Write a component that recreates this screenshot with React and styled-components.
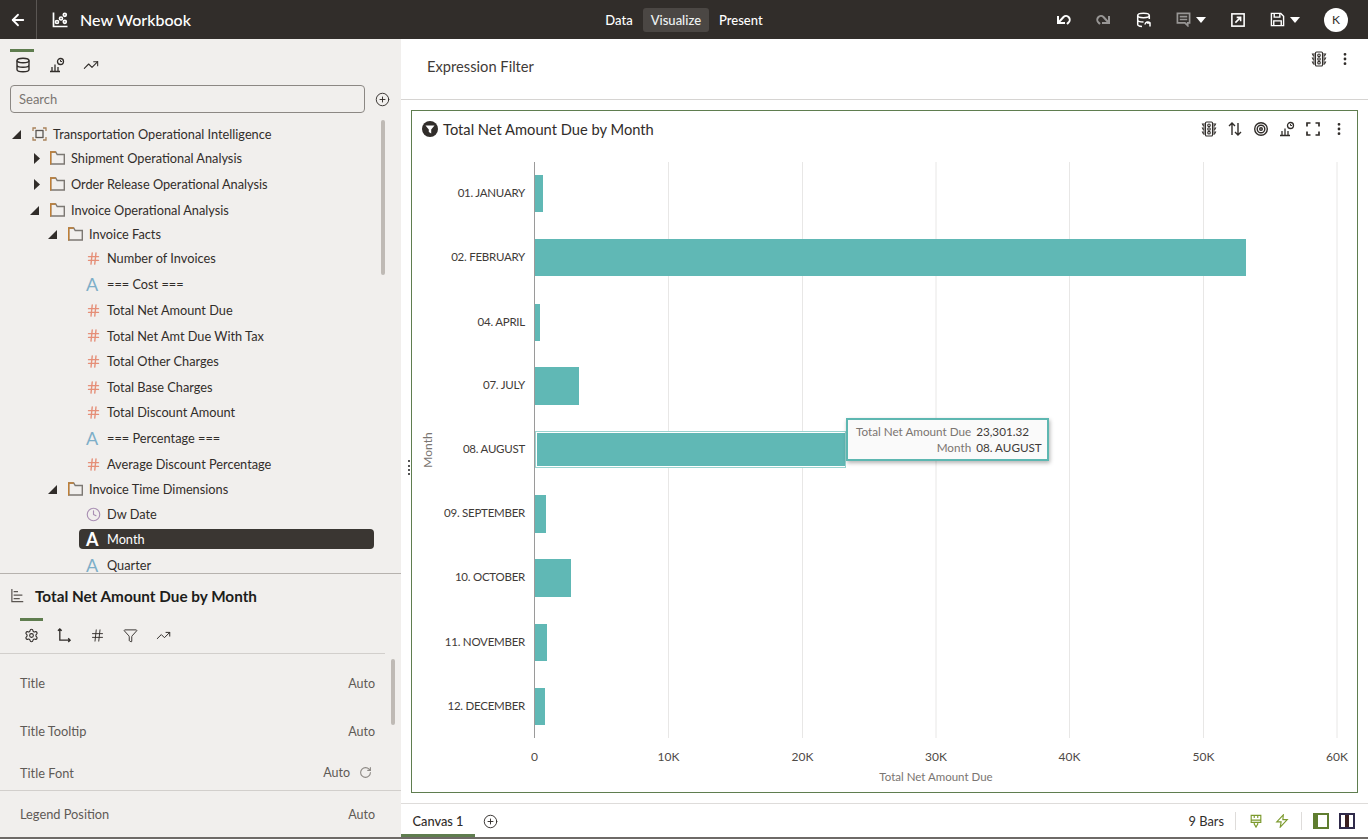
import React from 'react';
import styled, { createGlobalStyle } from 'styled-components';
import {
  ArrowLeft,
  Clock,
  Filter,
  Hash,
  MoreVertical,
  PlusCircle,
  RotateCw,
  Settings,
  TrendingUp,
} from 'lucide-react';

const Global = createGlobalStyle`
  html, body { margin: 0; padding: 0; height: 100%; overflow: hidden; }
  body { font-family: Lato, "Open Sans", sans-serif; color: #312d2a; background: #fff; }
  * { box-sizing: border-box; }
`;

const Page = styled.div`
  width: 1368px;
  height: 839px;
  display: flex;
  flex-direction: column;
  overflow: hidden;
`;

/* ---------- top bar ---------- */
const TopBar = styled.header`
  height: 39px;
  flex: none;
  background: #312d2a;
  color: #fff;
  display: grid;
  grid-template-columns: 1fr auto 1fr;
  align-items: center;
`;
const TopLeft = styled.div`
  display: flex;
  align-items: center;
  height: 100%;
`;
const BackBox = styled.div`
  width: 37px;
  height: 100%;
  display: flex;
  align-items: center;
  justify-content: center;
  border-right: 1px solid #5a5653;
`;
const WorkbookName = styled.div`
  display: flex;
  align-items: center;
  gap: 12px;
  padding-left: 15px;
  font-size: 16px;
  font-weight: 500;
`;
const ModeTabs = styled.nav`
  display: flex;
  align-items: center;
  gap: 2px;
`;
const ModeTab = styled.div`
  height: 24px;
  padding: 0 8px;
  display: flex;
  align-items: center;
  font-size: 13px;
  font-weight: 500;
  border-radius: 3px;
  background: ${(p) => (p.$active ? '#4b4744' : 'transparent')};
  color: ${(p) => (p.$active ? '#eef3f3' : '#fff')};
`;
const TopRight = styled.div`
  display: flex;
  align-items: center;
  justify-content: flex-end;
  padding-right: 20px;
`;
const TopIcon = styled.div`
  display: flex;
  align-items: center;
  gap: 5px;
  margin-left: ${(p) => p.$ml || 0}px;
  opacity: ${(p) => (p.$dim ? 0.5 : 1)};
`;
const DimSlot = styled.span`
  display: flex;
  opacity: 0.5;
`;
const Caret = styled.span`
  width: 0;
  height: 0;
  border-left: 5px solid transparent;
  border-right: 5px solid transparent;
  border-top: 6px solid #fff;
`;
const Avatar = styled.div`
  width: 24px;
  height: 24px;
  margin-left: 24px;
  border-radius: 50%;
  background: #fff;
  color: #312d2a;
  font-size: 12px;
  display: flex;
  align-items: center;
  justify-content: center;
`;

/* ---------- layout ---------- */
const Body = styled.div`
  flex: 1;
  display: flex;
  min-height: 0;
`;
const Side = styled.aside`
  width: 401px;
  flex: none;
  background: #f1efed;
  display: flex;
  flex-direction: column;
  border-bottom: 2px solid #6e6a67;
`;
const DataPanel = styled.section`
  height: 535px;
  flex: none;
  position: relative;
  overflow: hidden;
  border-bottom: 1px solid #b6b2ae;
`;
const Tabs = styled.div`
  display: flex;
  padding-left: ${(p) => p.$pl}px;
  padding-top: ${(p) => p.$pt}px;
`;
const TabItem = styled.div`
  width: ${(p) => p.$w}px;
  height: ${(p) => p.$h}px;
  display: flex;
  align-items: center;
  justify-content: center;
  padding-left: ${(p) => p.$inset || 0}px;
  border-top: 3px solid ${(p) => (p.$active ? '#5f7d4f' : 'transparent')};
`;
const SearchRow = styled.div`
  display: flex;
  align-items: center;
  gap: 10px;
  padding: 7px 0 0 10px;
`;
const SearchBox = styled.div`
  width: 355px;
  height: 28px;
  border: 1px solid #8c8884;
  border-radius: 4px;
  padding-left: 8px;
  display: flex;
  align-items: center;
  font-size: 13px;
  color: #7a7571;
`;
const Tree = styled.div`
  display: flex;
  flex-direction: column;
  padding-top: 9px;
  font-size: 12.75px;
`;
const Row = styled.div`
  height: 24px;
  flex: none;
  display: flex;
  align-items: center;
  margin-top: ${(p) => p.$mt || 0}px;
  padding-left: ${(p) => 12 + p.$depth * 18}px;
`;
const Twist = styled.span`
  width: 20px;
  flex: none;
  display: flex;
  padding-left: ${(p) => (p.$open ? 0 : 4)}px;
`;
const RowIcon = styled.span`
  width: 21px;
  flex: none;
  display: flex;
  align-items: center;
`;
const Leaf = styled.div`
  height: 20px;
  flex: none;
  margin: ${(p) => (p.$mt || 0) + 2}px 27px 2px 79px;
  padding-left: 7px;
  display: flex;
  align-items: center;
  border-radius: 4px;
  background: ${(p) => (p.$selected ? '#3a3632' : 'transparent')};
  color: ${(p) => (p.$selected ? '#fff' : 'inherit')};
`;
const LetterIcon = styled.span`
  font-size: 18px;
  line-height: 1;
  color: ${(p) => (p.$selected ? '#fff' : '#7daec8')};
  font-weight: ${(p) => (p.$selected ? 700 : 400)};
`;
const ScrollThumb = styled.div`
  position: absolute;
  left: ${(p) => p.$x}px;
  top: ${(p) => p.$y}px;
  width: 4px;
  height: ${(p) => p.$h}px;
  border-radius: 2px;
  background: #bfbab5;
`;
const PropsPanel = styled.section`
  flex: 1;
  position: relative;
  overflow: hidden;
  min-height: 0;
`;
const PropsTitle = styled.div`
  display: flex;
  align-items: center;
  gap: 10px;
  padding: 11px 0 0 11px;
  height: 32px;
  font-size: 15.3px;
  font-weight: 700;
  color: #201d1b;
`;
const PropsTabs = styled.div`
  margin-right: 16px;
  padding-bottom: 3px;
  border-bottom: 1px solid #d2cfcc;
`;
const PropRow = styled.div`
  height: ${(p) => p.$h}px;
  display: flex;
  align-items: center;
  justify-content: space-between;
  padding: 0 26px 0 20px;
  font-size: 12.8px;
  color: #5f5a56;
  border-bottom: ${(p) => (p.$line ? '1px solid #d2cfcc' : 'none')};
`;
const PropValue = styled.span`
  display: flex;
  align-items: center;
  gap: 9px;
  font-size: 12.5px;
  svg {
    margin-right: 3px;
  }
`;

/* ---------- canvas side ---------- */
const Main = styled.main`
  flex: 1;
  min-width: 0;
  display: flex;
  flex-direction: column;
  border-bottom: 2px solid #6e6a67;
`;
const FilterBar = styled.div`
  height: 61px;
  flex: none;
  display: flex;
  justify-content: space-between;
  border-bottom: 1px solid #d6d4d2;
  padding: 11px 15px 0 26px;
  font-size: 14.7px;
  color: #3f3b38;
`;
const FilterLabel = styled.div`
  padding-top: 7px;
`;
const IconGroup = styled.div`
  display: flex;
  align-items: center;
  gap: ${(p) => p.$gap}px;
  height: 18px;
`;
const ChartArea = styled.div`
  flex: 1;
  padding: 10px;
  min-height: 0;
  display: flex;
`;
const Frame = styled.div`
  flex: 1;
  position: relative;
  display: flex;
  flex-direction: column;
  border: 1px solid #5f7d4f;
  min-width: 0;
`;
const FrameHead = styled.div`
  height: 36px;
  flex: none;
  display: flex;
  align-items: center;
  justify-content: space-between;
  padding: 0 10px 1px;
`;
const FrameTitle = styled.div`
  display: flex;
  align-items: center;
  gap: 5px;
  font-size: 14.7px;
  color: #312d2a;
`;
const Plot = styled.svg`
  flex: 1;
  min-height: 0;
  display: block;
  font-family: Lato, "Open Sans", sans-serif;
`;
const Tooltip = styled.div`
  position: absolute;
  left: 434px;
  top: 307px;
  width: 203px;
  height: 43px;
  background: #fafafa;
  border: 2px solid #5db7b1;
  box-shadow: 1px 2px 4px rgba(0, 0, 0, 0.3);
  padding: 4px 8px;
  display: grid;
  grid-template-columns: auto auto;
  justify-content: start;
  column-gap: 5px;
  font-size: 11.7px;
  line-height: 15px;
  white-space: nowrap;
  color: #3f3b38;
`;
const TipKey = styled.span`
  text-align: right;
  color: #7a7571;
`;
const Handle = styled.div`
  position: absolute;
  left: 408px;
  top: 460px;
  width: 2px;
  height: 15px;
  border-left: 2px dotted #555;
`;
const Footer = styled.footer`
  height: 34px;
  flex: none;
  display: flex;
  align-items: stretch;
  border-top: 1px solid #dedcda;
  font-size: 12.8px;
`;
const CanvasTab = styled.div`
  width: 74px;
  display: flex;
  align-items: center;
  justify-content: center;
  padding-top: 3px;
  font-weight: 500;
  border-bottom: 3px solid #5f7d4f;
`;
const AddTab = styled.div`
  display: flex;
  align-items: center;
  padding: 1px 0 0 8px;
`;
const FootRight = styled.div`
  margin-left: auto;
  display: flex;
  align-items: center;
  padding-right: 13px;
`;
const Sep = styled.span`
  width: 1px;
  height: 18px;
  background: #dedcda;
  margin: 0 ${(p) => p.$mr}px 0 ${(p) => p.$ml}px;
`;
const FootGap = styled.span`
  width: 12px;
`;

/* ---------- drawn icons ---------- */
const Svg = ({ size = 16, color = '#312d2a', sw = 1.4, children }) => (
  <svg width={size} height={size} viewBox="0 0 16 16" fill="none" stroke={color} strokeWidth={sw}>
    {children}
  </svg>
);
const LogoIcon = () => (
  <Svg color="#fff" size={16} sw={1.7}>
    <path d="M1.5 .5v14H15.500" />
    <circle cx="5" cy="10" r="1.500" />
    <circle cx="9" cy="6.500" r="1.500" />
    <circle cx="12.800" cy="2.800" r="1.500" />
    <circle cx="12.800" cy="9.800" r="1.500" />
  </Svg>
);
const TrafficIcon = () => (
  <Svg size={16} sw={1.1}>
    <rect x="4.500" y="1" width="7" height="14" rx="1" />
    <circle cx="8" cy="4.300" r="1.300" />
    <circle cx="8" cy="8" r="1.300" />
    <circle cx="8" cy="11.700" r="1.300" />
    <path d="M4.500 3h-3l1 2h2M4.500 7h-3l1 2h2M4.500 11h-3l1 2h2M11.500 3h3l-1 2h-2M11.500 7h3l-1 2h-2M11.500 11h3l-1 2h-2" />
  </Svg>
);
const BarsClock = () => (
  <Svg size={16} sw={1.3}>
    <path d="M1 14.500h10M3 14V10M6 14V7.500M9 14v-4" />
    <circle cx="11.500" cy="4.500" r="3" />
    <path d="M11.500 3v1.500h1.500" strokeWidth="1" />
  </Svg>
);
const DbIcon = () => (
  <Svg size={16}>
    <ellipse cx="8" cy="3.500" rx="6" ry="2.300" />
    <path d="M2 3.500v9c0 1.300 2.700 2.300 6 2.300s6-1 6-2.300v-9M2 8c0 1.300 2.700 2.300 6 2.300S14 9.300 14 8" />
  </Svg>
);
const FolderIcon = () => (
  <svg width="15" height="14" viewBox="0 0 15 14" fill="none" strokeWidth="1.400">
    <path d="M.7 13V1h5l1.500 2.500H14.300V13z" stroke="#7c7873" />
    <path d="M.7 13.500V1h5" stroke="#c07f35" />
  </svg>
);
const RootIcon = () => (
  <svg width="15" height="14" viewBox="0 0 15 14" fill="none" stroke="#5b5652" strokeWidth="1.300">
    <path d="M1 4V1h3M11 1h3v3M14 10v3h-3M4 13H1v-3" stroke="#a9825a" />
    <rect x="4" y="3.500" width="7" height="7" />
  </svg>
);
const Tri = ({ open }) =>
  open ? (
    <svg width="9" height="9" viewBox="0 0 9 9"><path d="M9 0v9H0z" fill="#312d2a" /></svg>
  ) : (
    <svg width="6" height="11" viewBox="0 0 6 11"><path d="M0 0l6 5.500L0 11z" fill="#312d2a" /></svg>
  );
const UndoIcon = ({ flip }) => (
  <svg width="15" height="13" viewBox="0 0 15 13" fill="none" stroke="#fff" strokeWidth="2" style={flip ? { transform: 'scaleX(-1)' } : undefined}>
    <path d="M2 3v7h7" />
    <path d="M2.500 9.500L7.500 4a3.700 3.700 0 0 1 5 5.500l-1.500 1.500" />
  </svg>
);
const DataRefresh = () => (
  <Svg color="#fff" size={16} sw={1.500}>
    <ellipse cx="7.500" cy="3.500" rx="5.800" ry="2.200" />
    <path d="M1.700 3.500v9c0 1 1.800 1.800 4.300 2M13.300 3.500V7M1.700 8c0 1.200 2.500 2 5.800 2" />
    <path d="M9 12.500a2.800 2.800 0 0 1 5-1.500M14 14.500v-3.500h-3" />
  </Svg>
);
const CommentIcon = () => (
  <Svg color="#fff" size={15} sw={1.800}>
    <path d="M1.500 1.500h13v10h-2v3l-3-3h-8z" />
    <path d="M4 5h8M4 8h8" />
  </Svg>
);
const ExportIcon = () => (
  <Svg color="#fff" size={14} sw={1.800}>
    <rect x="1" y="1" width="14" height="14" />
    <path d="M5 11l6-6M6.500 5H11v4.500" />
  </Svg>
);
const SaveIcon = () => (
  <Svg color="#fff" size={15} sw={1.500}>
    <path d="M1.500 1.500h10l3 3v10h-13z" />
    <path d="M4.500 1.500v4h6v-4M4 14.500V9.500h8v5" />
  </Svg>
);
const SortIcon = () => (
  <Svg size={16}>
    <path d="M5 14V2M2 5l3-3 3 3M11 2v12M8 11l3 3 3-3" />
  </Svg>
);
const TargetIcon = () => (
  <Svg size={16}>
    <circle cx="8" cy="8" r="6.300" />
    <circle cx="8" cy="8" r="3.800" />
    <circle cx="8" cy="8" r="1.300" />
  </Svg>
);
const ExpandIcon = () => (
  <Svg size={16} sw={1.700}>
    <path d="M2 5.500V2h3.500M10.500 2H14v3.500M14 10.500V14h-3.500M5.500 14H2v-3.500" />
  </Svg>
);
const FunnelBadge = () => (
  <svg width="16" height="16" viewBox="0 0 16 16">
    <circle cx="8" cy="8" r="8" fill="#312d2a" />
    <path d="M3.500 4.500h9L9.200 8.500v4L6.800 11V8.500z" fill="#fff" />
  </svg>
);
const AxisIcon = () => (
  <Svg size={15}>
    <path d="M3 1v12h11M1 3l2-2 2 2M12 11l2 2-2 2" />
  </Svg>
);
const BarListIcon = () => (
  <Svg size={14} color="#5b5652">
    <path d="M1 0v15M3 3h5M3 7h10M3 11h7M1 14.500h13" />
  </Svg>
);
const BrushIcon = () => (
  <Svg size={14} color="#7c9a2e" sw={1.300}>
    <path d="M2.500 1.500h11v8h-11zM2.500 7h11M6 1.500v3M10 1.500v3M6 9.500v2L8 15l2-3.500v-2" />
  </Svg>
);
const BoltIcon = () => (
  <Svg size={14} color="#7c9a2e" sw={1.300}>
    <path d="M9.500 1L2 9h5l-1 6 8-8.500H9z" />
  </Svg>
);
const ToggleLeft = styled.span`
  width: 16px;
  height: 16px;
  border: 2px solid #5f7d2f;
  border-left-width: 5px;
  margin-right: 10px;
  background: #fff;
`;
const ToggleRight = styled.span`
  width: 16px;
  height: 16px;
  border: 2px solid #2f2a4a;
  display: flex;
  justify-content: center;
  &::after {
    content: '';
    width: 4px;
    background: #3a1f1f;
  }
`;

/* ---------- data ---------- */
const treeRows = [
  { label: 'Shipment Operational Analysis', depth: 1, mt: 0 },
  { label: 'Order Release Operational Analysis', depth: 1, mt: 2 },
  { label: 'Invoice Operational Analysis', depth: 1, mt: 2, open: true },
  { label: 'Invoice Facts', depth: 2, mt: 0, open: true },
];
const facts = [
  { label: 'Number of Invoices', kind: 'hash', mt: 0 },
  { label: '=== Cost ===', kind: 'attr', mt: 2 },
  { label: 'Total Net Amount Due', kind: 'hash', mt: 2 },
  { label: 'Total Net Amt Due With Tax', kind: 'hash', mt: 1.5 },
  { label: 'Total Other Charges', kind: 'hash', mt: 1.5 },
  { label: 'Total Base Charges', kind: 'hash', mt: 2 },
  { label: 'Total Discount Amount', kind: 'hash', mt: 1 },
  { label: '=== Percentage ===', kind: 'attr', mt: 2 },
  { label: 'Average Discount Percentage', kind: 'hash', mt: 2 },
];
const timeRows = [
  { label: 'Dw Date', kind: 'time', mt: 1 },
  { label: 'Month', kind: 'attr', mt: 1, selected: true },
  { label: 'Quarter', kind: 'attr', mt: 2 },
];
const bars = [
  { label: '01. JANUARY', y: 175, h: 37, x2: 543 },
  { label: '02. FEBRUARY', y: 239, h: 37, x2: 1246 },
  { label: '04. APRIL', y: 304, h: 37, x2: 540 },
  { label: '07. JULY', y: 367, h: 38, x2: 579 },
  { label: '08. AUGUST', y: 433, h: 33, x2: 845, x1: 537 },
  { label: '09. SEPTEMBER', y: 495, h: 38, x2: 546 },
  { label: '10. OCTOBER', y: 559, h: 38, x2: 571 },
  { label: '11. NOVEMBER', y: 624, h: 37, x2: 547 },
  { label: '12. DECEMBER', y: 688, h: 37, x2: 545 },
];
const ticks = [
  ['0', 534.5],
  ['10K', 668.5],
  ['20K', 802.5],
  ['30K', 936],
  ['40K', 1069.5],
  ['50K', 1203.5],
  ['60K', 1337],
];

const LeafIcon = ({ kind, selected }) => {
  if (kind === 'hash') return <Hash size={15} color="#e58f78" strokeWidth={2.2} />;
  if (kind === 'time') return <Clock size={15} color="#a98fb3" strokeWidth={1.8} />;
  return <LetterIcon $selected={selected}>A</LetterIcon>;
};

const LeafRow = ({ row }) => (
  <Leaf $mt={row.mt} $selected={row.selected}>
    <RowIcon><LeafIcon kind={row.kind} selected={row.selected} /></RowIcon>
    {row.label}
  </Leaf>
);

const FolderRow = ({ row }) => (
  <Row $depth={row.depth} $mt={row.mt}>
    <Twist $open={row.open}><Tri open={row.open} /></Twist>
    <RowIcon><FolderIcon /></RowIcon>
    {row.label}
  </Row>
);

function Chart() {
  return (
    <Plot viewBox="412 147 945 645">
      {ticks.slice(1).map(([t, x]) => (
        <line key={t} x1={x} x2={x} y1="162" y2="738" stroke="#e8e7e6" />
      ))}
      <line x1="534.500" x2="534.500" y1="162" y2="738" stroke="#9a9a9a" />
      <rect x="535.500" y="431.500" width="310" height="36" fill="#fff" stroke="#9ad3cf" />
      {bars.map((b) => (
        <g key={b.label}>
          <rect x={b.x1 || 535} y={b.y} width={b.x2 - (b.x1 || 535)} height={b.h} fill="#60b8b5" />
          <text x="525" y={b.y + b.h / 2 + 3} textAnchor="end" fontSize="11.5" letterSpacing="-0.25" fill="#3f3b38">{b.label}</text>
        </g>
      ))}
      {ticks.map(([t, x]) => (
        <text key={t} x={x} y="761" textAnchor="middle" fontSize="12" fill="#4f4b47">{t}</text>
      ))}
      <text x="936" y="781" textAnchor="middle" fontSize="11.5" fill="#7a7571">Total Net Amount Due</text>
      <text transform="translate(432 450) rotate(-90)" textAnchor="middle" fontSize="12" fill="#7a7571">Month</text>
    </Plot>
  );
}

export default function App() {
  return (
    <Page>
      <Global />
      <TopBar>
        <TopLeft>
          <BackBox><ArrowLeft size={18} color="#fff" strokeWidth={2.4} /></BackBox>
          <WorkbookName><LogoIcon />New Workbook</WorkbookName>
        </TopLeft>
        <ModeTabs>
          <ModeTab>Data</ModeTab>
          <ModeTab $active>Visualize</ModeTab>
          <ModeTab>Present</ModeTab>
        </ModeTabs>
        <TopRight>
          <TopIcon><UndoIcon /></TopIcon>
          <TopIcon $ml={25} $dim><UndoIcon flip /></TopIcon>
          <TopIcon $ml={25}><DataRefresh /></TopIcon>
          <TopIcon $ml={24}><DimSlot><CommentIcon /></DimSlot><Caret /></TopIcon>
          <TopIcon $ml={25}><ExportIcon /></TopIcon>
          <TopIcon $ml={25}><SaveIcon /><Caret /></TopIcon>
          <Avatar>K</Avatar>
        </TopRight>
      </TopBar>
      <Body>
        <Side>
          <DataPanel>
            <Tabs $pl={10} $pt={10}>
              <TabItem $w={24} $h={29} $inset={2} $active><DbIcon /></TabItem>
              <TabItem $w={46} $h={29}><BarsClock /></TabItem>
              <TabItem $w={22} $h={29}><TrendingUp size={16} color="#312d2a" strokeWidth={1.6} /></TabItem>
            </Tabs>
            <SearchRow>
              <SearchBox>Search</SearchBox>
              <PlusCircle size={15} color="#312d2a" strokeWidth={1.5} />
            </SearchRow>
            <Tree>
              <Row $depth={0}>
                <Twist $open><Tri open /></Twist>
                <RowIcon><RootIcon /></RowIcon>
                Transportation Operational Intelligence
              </Row>
              {treeRows.map((r) => <FolderRow key={r.label} row={r} />)}
              {facts.map((r) => <LeafRow key={r.label} row={r} />)}
              <FolderRow row={{ label: 'Invoice Time Dimensions', depth: 2, mt: 1, open: true }} />
              {timeRows.map((r) => <LeafRow key={r.label} row={r} />)}
            </Tree>
            <ScrollThumb $x={381} $y={81} $h={155} />
          </DataPanel>
          <PropsPanel>
            <PropsTitle><BarListIcon />Total Net Amount Due by Month</PropsTitle>
            <PropsTabs>
              <Tabs $pl={20} $pt={12}>
                <TabItem $w={23} $h={32} $active><Settings size={15} color="#312d2a" strokeWidth={1.7} /></TabItem>
                <TabItem $w={43} $h={32}><AxisIcon /></TabItem>
                <TabItem $w={23} $h={32}><Hash size={15} color="#312d2a" strokeWidth={1.5} /></TabItem>
                <TabItem $w={43} $h={32}><Filter size={15} color="#312d2a" strokeWidth={1.5} /></TabItem>
                <TabItem $w={23} $h={32}><TrendingUp size={15} color="#312d2a" strokeWidth={1.6} /></TabItem>
              </Tabs>
            </PropsTabs>
            <PropRow $h={5} />
            <PropRow $h={48}>Title<PropValue>Auto</PropValue></PropRow>
            <PropRow $h={48}>Title Tooltip<PropValue>Auto</PropValue></PropRow>
            <PropRow $h={36} $line>Title Font<PropValue>Auto<RotateCw size={13} color="#8c8884" /></PropValue></PropRow>
            <PropRow $h={46}>Legend Position<PropValue>Auto</PropValue></PropRow>
            <ScrollThumb $x={391} $y={85} $h={66} />
          </PropsPanel>
        </Side>
        <Main>
          <FilterBar>
            <FilterLabel>Expression Filter</FilterLabel>
            <IconGroup $gap={10}><TrafficIcon /><MoreVertical size={16} color="#312d2a" strokeWidth={2.2} /></IconGroup>
          </FilterBar>
          <ChartArea>
            <Frame>
              <FrameHead>
                <FrameTitle><FunnelBadge />Total Net Amount Due by Month</FrameTitle>
                <IconGroup $gap={10}>
                  <TrafficIcon />
                  <SortIcon />
                  <TargetIcon />
                  <BarsClock />
                  <ExpandIcon />
                  <MoreVertical size={16} color="#312d2a" strokeWidth={2.2} />
                </IconGroup>
              </FrameHead>
              <Chart />
              <Tooltip>
                <TipKey>Total Net Amount Due</TipKey><span>23,301.32</span>
                <TipKey>Month</TipKey><span>08. AUGUST</span>
              </Tooltip>
            </Frame>
          </ChartArea>
          <Footer>
            <CanvasTab>Canvas 1</CanvasTab>
            <AddTab><PlusCircle size={15} color="#312d2a" strokeWidth={1.5} /></AddTab>
            <FootRight>
              9 Bars
              <Sep $ml={11} $mr={13} />
              <BrushIcon />
              <FootGap />
              <BoltIcon />
              <Sep $ml={12} $mr={11} />
              <ToggleLeft />
              <ToggleRight />
            </FootRight>
          </Footer>
        </Main>
      </Body>
      <Handle />
    </Page>
  );
}
